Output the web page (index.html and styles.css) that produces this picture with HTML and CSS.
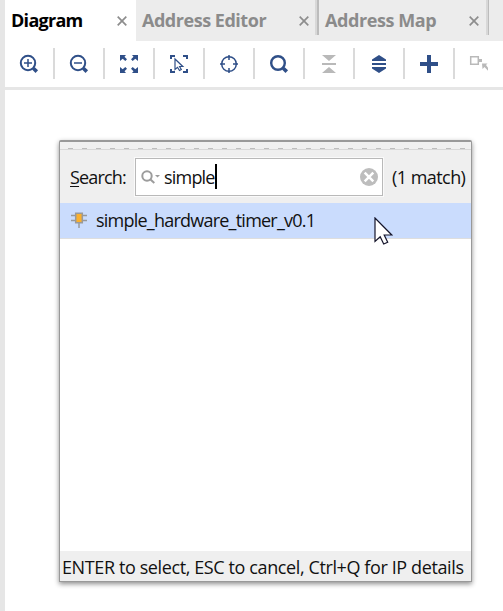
FILE: index.html
```html
<!DOCTYPE html>
<html lang="en">
<head>
<meta charset="utf-8">
<title>Diagram</title>
<link rel="stylesheet" href="styles.css">
</head>
<body>
<div class="app">
  <nav class="tabs">
    <div class="tab active"><span class="t-diagram">Diagram</span><svg class="close" viewBox="0 0 10 10"><path d="M.7.7l8.6 8.6M9.3.7L.7 9.3"/></svg></div>
    <div class="tab editor"><span class="t-editor">Address Editor</span><svg class="close" viewBox="0 0 10 10"><path d="M.7.7l8.6 8.6M9.3.7L.7 9.3"/></svg></div>
    <div class="tab map"><span class="t-map">Address Map</span><svg class="close" viewBox="0 0 10 10"><path d="M.7.7l8.6 8.6M9.3.7L.7 9.3"/></svg></div>
  </nav>
  <div class="toolbar">
    <div class="tool"><svg viewBox="0 0 20 20"><circle cx="9" cy="9" r="7.2" class="s2"/><path class="s15" d="M5 9h8M9 5v8"/><path class="s4" d="M14.3 14.3l3.5 3.3"/></svg></div>
    <div class="tool"><svg viewBox="0 0 20 20"><circle cx="9" cy="9" r="7.2" class="s2"/><path class="s15" d="M5 9h8"/><path class="s4" d="M14.3 14.3l3.5 3.3"/></svg></div>
    <div class="tool"><svg viewBox="0 0 20 20"><path class="f" d="M1 1h6L5.500 2.800 8 5.300 6.300 7 3.700 4.700 1 7zM19 1v6l-2.700-2.300L13.700 7 12 5.300l2.500-2.500L13 1zM1 19v-6l2.700 2.300L6.300 13 8 14.700l-2.500 2.500L7 19zM19 19h-6l1.500-1.800-2.500-2.500 1.700-1.700 2.600 2.300L19 13z"/></svg></div>
    <div class="tool"><svg viewBox="0 0 20 20"><path class="s2" d="M2 5V2h4M14 2h4v3M2 15v3h4M14 18h4v-3"/><path class="s1" d="M6 5v10.500l2.500-2.200 2 3.200 1.800-1-1.700-3h3.200z"/></svg></div>
    <div class="tool"><svg viewBox="0 0 20 20"><circle cx="10" cy="10" r="7.300" class="s15"/><path class="s15" d="M10 1v5M10 14v5M1 10h5M14 10h5"/></svg></div>
    <div class="tool"><svg viewBox="0 0 20 20"><circle cx="9" cy="9" r="6.800" class="s2b"/><path class="s4" d="M14.200 14.200l3.600 3.400"/></svg></div>
    <div class="tool muted"><svg viewBox="0 0 20 20"><path class="f" d="M3 1h14l-7 6zM3 19h14l-7-6zM3 9h14v2H3z"/></svg></div>
    <div class="tool"><svg viewBox="0 0 20 20"><path class="f" d="M10 1l7 4.500V7H3V5.500zM10 19l7-4.500V13H3v1.500zM3 9h14v2H3z"/></svg></div>
    <div class="tool"><svg viewBox="0 0 20 20"><path class="f" d="M8 1h4v7h7v4h-7v7H8v-7H1V8h7z"/></svg></div>
    <div class="tool muted"><svg viewBox="0 0 20 20"><path class="s15" d="M1.700 2.700h7.600v7.600H1.700z"/><path class="f" d="M9 5h4v3H9zM13 9.500h5.500L17 11l2 2.700v3L15.500 13 13.500 15z"/></svg></div>
  </div>
  <main class="canvas">
    <section class="dialog">
      <div class="grip"></div>
      <div class="search">
        <label class="t-search"><u>S</u>earch:</label>
        <div class="field">
          <svg class="lens" viewBox="0 0 20 14"><circle cx="6" cy="6" r="4.700"/><path d="M9.500 9.500l3.800 3.500"/><path class="down" d="M14 5h5l-2.500 2.500z"/></svg>
          <span class="t-query">simple</span><i class="caret"></i>
          <svg class="clear" viewBox="0 0 18 18"><circle cx="9" cy="9" r="9"/><path d="M4.700 4.700l8.600 8.600M13.300 4.700l-8.600 8.600"/></svg>
        </div>
        <span class="t-match">(1 match)</span>
      </div>
      <div class="result">
        <svg class="chip" viewBox="0 0 16 17"><path d="M0 3.500h16M0 8.500h16M8 11v5"/><path class="body" d="M4.700 1.200h6.600v9.600H4.700z"/></svg>
        <span class="t-result">simple_hardware_timer_v0.1</span>
      </div>
      <div class="list"></div>
      <footer><span class="t-footer">ENTER to select, ESC to cancel, Ctrl+Q for IP details</span></footer>
    </section>
  </main>
  <svg class="pointer" viewBox="0 0 19 28"><path d="M1 1v23.500l5.200-4.800 3.500 7.300 4-1.800-3.500-7.200h7.600z"/></svg>
</div>
</body>
</html>
```

FILE: styles.css
```css
* { box-sizing: border-box; }
body { margin: 0; background: #fff; font-family: "Open Sans", "Noto Sans", sans-serif; font-size: 18px; color: #111; }
svg { display: block; flex: none; }
span, label { white-space: nowrap; }
.app { position: relative; width: 503px; height: 611px; overflow: hidden; border-left: 5px solid #e6e6e6; display: flex; flex-direction: column; }
.tabs { display: flex; height: 41px; background: #ececec; flex: none; }
.tab { display: flex; align-items: center; justify-content: space-between; font-weight: 700; color: #8b8b8b; height: 41px; position: relative; }
.tab span, .result span { padding-bottom: 2px; }
.active { width: 131px; background: #fff; color: #000; padding: 0 9px 0 6px; }
.editor { width: 183px; padding: 0 10px 0 6px; }
.map { width: 170px; padding: 0 10px 0 6px; }
.editor::after, .map::after { content: ""; position: absolute; top: 0; right: 0; width: 4px; height: 35px; background: linear-gradient(90deg, #d8d8d8 50%, #bcbcbc 50%); }
.map::after { width: 3px; }
.close { width: 10px; height: 10px; fill: none; stroke: #8d8d8d; stroke-width: 1.7; }
.toolbar { display: flex; height: 49px; flex: none; border-bottom: 3px solid #e6e6e6; padding-top: 7px; }
.tool { width: 50px; height: 31px; flex: none; border-right: 2px solid #dadada; display: flex; align-items: center; justify-content: center; color: #2f4f88; }
.tool:last-child { border: 0; padding-right: 2px; }
.tool svg { width: 20px; height: 20px; }
.tool.muted { color: #b9b9b9; }
.f { fill: currentColor; }
.s1, .s15, .s2, .s2b, .s4 { fill: none; stroke: currentColor; stroke-width: 1.2; }
.s15 { stroke-width: 1.5; }
.s2 { stroke-width: 2; }
.s2b { stroke-width: 2.4; }
.s4 { stroke-width: 3.6; }
.canvas { padding: 50px 0 0 54px; }
.dialog { width: 413px; height: 442px; border: 1px solid #999; border-top-width: 2px; border-radius: 2px 2px 0 0; box-shadow: 0 2px 5px rgba(0,0,0,.45); background: #fff; display: flex; flex-direction: column; }
.grip { height: 8px; flex: none; background: repeating-linear-gradient(90deg, transparent 0 8px, #bdbdbd 8px 13px, transparent 13px 14px) 0 6px / 100% 1px no-repeat, #f0f0f0; border-bottom: 1px solid #d8d8d8; }
.search { height: 53px; flex: none; background: #efefef; display: flex; align-items: center; padding: 0 0 0 10px; }
.t-search { width: 65px; }
.t-search u { text-decoration-thickness: 1px; text-underline-offset: 2px; }
.field { width: 248px; height: 38px; border: 1px solid #b9b9b9; outline: 1px solid #fafafa; background: #fff; display: flex; align-items: center; margin-right: 9px; padding: 0 4px 0 5px; }
.lens { width: 20px; height: 14px; margin-right: 3px; fill: none; stroke: #9c9c9c; stroke-width: 2; }
.lens .down { fill: #9c9c9c; stroke: none; }
.caret { width: 2px; height: 25px; background: #000; }
.clear { width: 18px; height: 18px; margin-left: auto; fill: #bdbdbd; }
.clear path { stroke: #fff; stroke-width: 2.5; }
.result { height: 36px; flex: none; background: #cadcfd; border-bottom: 1px solid #dedede; display: flex; align-items: center; padding-left: 11px; }
.chip { width: 16px; height: 17px; margin-right: 9px; fill: none; stroke: #999; stroke-width: 1.5; }
.chip .body { fill: #fbb02d; }
.list { flex: 1; }
footer { height: 30px; flex: none; background: #efefef; display: flex; align-items: center; padding: 2px 0 0 2px; }
.t-diagram { letter-spacing: -.72px; }
.t-editor { letter-spacing: -.47px; }
.t-map { letter-spacing: -.42px; }
.t-search { letter-spacing: -.83px; }
.t-query { letter-spacing: -.8px; }
.t-result { letter-spacing: -.77px; }
.t-match { letter-spacing: -.55px; }
.t-footer { letter-spacing: -.39px; }
.pointer { position: absolute; left: 369px; top: 217px; width: 19px; height: 28px; fill: #fff; stroke: #14142a; stroke-width: 1.2; }
```
